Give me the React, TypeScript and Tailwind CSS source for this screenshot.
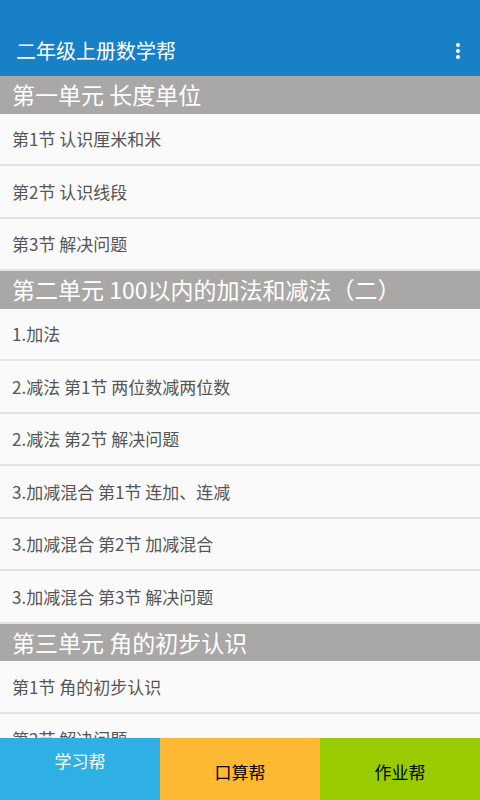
import type { ReactNode } from 'react';

const font = { fontFamily: '"Noto Sans CJK SC", Roboto, sans-serif' };

const units: Array<{ title: string; items: string[] }> = [
  { title: '第一单元 长度单位', items: ['第1节 认识厘米和米', '第2节 认识线段', '第3节 解决问题'] },
  {
    title: '第二单元 100以内的加法和减法（二）',
    items: [
      '1.加法',
      '2.减法 第1节 两位数减两位数',
      '2.减法 第2节 解决问题',
      '3.加减混合 第1节 连加、连减',
      '3.加减混合 第2节 加减混合',
      '3.加减混合 第3节 解决问题',
    ],
  },
  { title: '第三单元 角的初步认识', items: ['第1节 角的初步认识', '第2节 解决问题'] },
];

function SectionHeader({ children }: { children: ReactNode }) {
  return (
    <div className="flex h-[37.5px] items-center bg-[#a9a8a7] pl-3 text-[23px] leading-none text-white">
      {children}
    </div>
  );
}

function Row({ label }: { label: string }) {
  return (
    <div className="flex h-[52.5px] items-center border-b-2 border-[#e3e3e3] bg-[#fafafa] pl-3 text-[17px] text-[#555555]">
      {label}
    </div>
  );
}

export default function App() {
  return (
    <div className="flex h-[800px] w-[480px] flex-col overflow-hidden bg-[#fafafa]" style={font}>
      <div className="flex h-[76px] shrink-0 items-end justify-between bg-[#1780c6] pb-[15px] pl-4 pr-5">
        <span className="text-[20px] leading-none text-white">二年级上册数学帮</span>
        <div className="flex flex-col gap-[2px] pb-[2px]">
          <span className="h-[4px] w-[4px] rounded-full bg-white" />
          <span className="h-[4px] w-[4px] rounded-full bg-white" />
          <span className="h-[4px] w-[4px] rounded-full bg-white" />
        </div>
      </div>

      <div className="min-h-0 flex-1 overflow-hidden">
        {units.map((unit) => (
          <div key={unit.title}>
            <SectionHeader>{unit.title}</SectionHeader>
            {unit.items.map((item, i) => (
              <Row key={i} label={item} />
            ))}
          </div>
        ))}
      </div>

      <div className="grid h-[62px] shrink-0 grid-cols-3 text-[17px]">
        <div className="flex justify-center bg-[#2eb0e4] pt-[10px] text-white">学习帮</div>
        <div className="flex items-center justify-center bg-[#fdb933] pt-[6px] text-black">口算帮</div>
        <div className="flex items-center justify-center bg-[#99cc00] pt-[6px] text-black">作业帮</div>
      </div>
    </div>
  );
}
